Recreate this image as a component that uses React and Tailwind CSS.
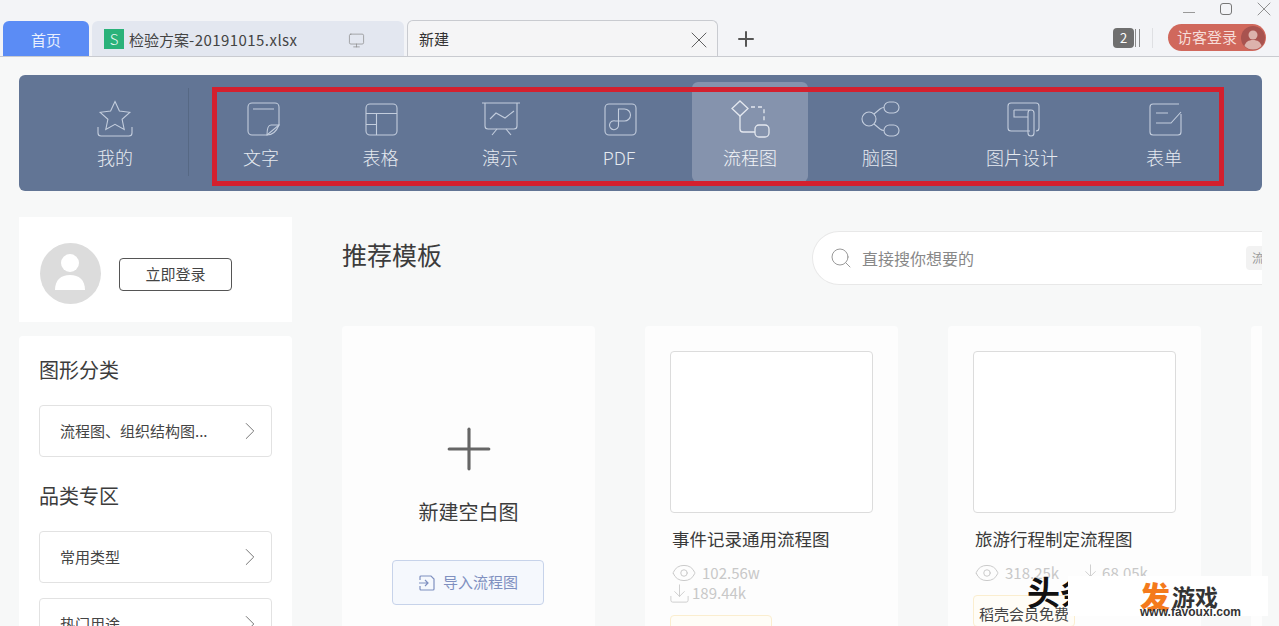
import React from 'react';
import { Monitor, X, Plus, ChevronRight, Search, Eye, Download } from 'lucide-react';

const ico = 'fill-none stroke-[#c3cddd] stroke-[1.1]';

const StarIcon = () => (
  <svg width="36" height="38" viewBox="0 0 36 38" className={ico}>
    <path d="M18 1.500l4.400 9.600 10.400 1.200-7.700 7 2.100 10.200-9.200-5.200-9.200 5.200 2.100-10.200-7.700-7 10.400-1.200z" />
    <path d="M1 27v6a3 3 0 0 0 3 3h28a3 3 0 0 0 3-3v-6" />
  </svg>
);
const DocIcon = () => (
  <svg width="33" height="34" viewBox="0 0 33 34" className={ico}>
    <path d="M20 33H5a4 4 0 0 1-4-4V5a4 4 0 0 1 4-4h23a4 4 0 0 1 4 4v18z" />
    <path d="M20 33c0-6 1-10 4-10h8c-2 5-6 10-12 10zM6 7h21" />
  </svg>
);
const TableIcon = () => (
  <svg width="33" height="33" viewBox="0 0 33 33" className={ico}>
    <rect x="1" y="1" width="31" height="31" rx="4" />
    <path d="M1 10.500h31M11.500 10.500V32M1 21.500h10.500" />
  </svg>
);
const SlideIcon = () => (
  <svg width="38" height="34" viewBox="0 0 38 34" className={ico}>
    <path d="M0 1h38M3 1v23a3 3 0 0 0 3 3h26a3 3 0 0 0 3-3V1" />
    <path d="M8 17l6-6 9 5 9-7M15 27l-5 6M24 27l5 6" />
  </svg>
);
const PdfIcon = () => (
  <svg width="33" height="33" viewBox="0 0 33 33" className={ico}>
    <rect x="1" y="1" width="31" height="31" rx="4" />
    <path d="M14.500 22V6h6a6 6 0 0 1 0 12H11.500a4.500 4.500 0 1 0 3 4" />
  </svg>
);
const FlowIcon = () => (
  <svg width="40" height="38" viewBox="0 0 40 38" className="fill-none stroke-[#e4e8ef] stroke-[1.3]">
    <path d="M10 1l8 7.500-8 7.500-8-7.500z" />
    <path d="M21 7h11a2 2 0 0 1 2 2v14" strokeDasharray="4 3" />
    <path d="M10 16v13a3 3 0 0 0 3 3h12" />
    <rect x="25" y="25" width="14" height="12" rx="4" />
  </svg>
);
const MindIcon = () => (
  <svg width="40" height="36" viewBox="0 0 40 36" className={ico}>
    <circle cx="8" cy="18" r="7" />
    <rect x="23" y="1" width="15" height="11" rx="5.500" />
    <rect x="23" y="24" width="15" height="11" rx="5.500" />
    <path d="M13 13l6-5q2-1.500 4-1.500M13 23l6 5q2 1.500 4 1.500" />
  </svg>
);
const DesignIcon = () => (
  <svg width="33" height="35" viewBox="0 0 33 35" className={ico}>
    <path d="M23 29H4a3 3 0 0 1-3-3V4a3 3 0 0 1 3-3h25a3 3 0 0 1 3 3v22a3 3 0 0 1-3 3" />
    <path d="M7 8h17a3 3 0 0 0-3 3v20a3 3 0 0 0 6 0V11a3 3 0 0 0-3-3M7 8v7h14" />
  </svg>
);
const FormIcon = () => (
  <svg width="33" height="33" viewBox="0 0 33 33" className={ico}>
    <path d="M30 1H4a3 3 0 0 0-3 3v25a3 3 0 0 0 3 3h25a3 3 0 0 0 3-3V11" />
    <path d="M7 10h12M7 20h15L32 9" />
  </svg>
);

const navItems = [
  { label: '文字', icon: <DocIcon />, width: 'w-[120px]', iconClass: 'ml-[5px]' },
  { label: '表格', icon: <TableIcon />, width: 'w-[119px]', iconClass: 'ml-[1px]' },
  { label: '演示', icon: <SlideIcon />, width: 'w-[120px]', iconClass: 'ml-[2px]' },
  { label: 'PDF', icon: <PdfIcon />, width: 'w-[118px]', iconClass: 'ml-[3px]' },
  { label: '流程图', icon: <FlowIcon />, width: 'w-[116px] ml-[14px]', iconClass: '', active: true },
  { label: '脑图', icon: <MindIcon />, width: 'w-[144px]', iconClass: 'ml-[1px]' },
  { label: '图片设计', icon: <DesignIcon />, width: 'w-[140px]', iconClass: 'ml-[2px]' },
  { label: '表单', icon: <FormIcon />, width: 'w-[144px]', iconClass: 'ml-[2px]' },
];

const NavItem = ({ item }) => (
  <div
    className={`flex h-[100px] shrink-0 flex-col items-center justify-start rounded-md ${item.width} ${
      item.active ? 'bg-[#8593ad] text-[#f2f4f7]' : 'text-[#e6eaf0]'
    }`}
  >
    <div className={`mt-[19px] flex h-[36px] items-center ${item.iconClass}`}>{item.icon}</div>
    <span className="mt-[7px] text-[18px] font-light leading-[26px]">{item.label}</span>
  </div>
);

const SelectBox = ({ label, className = '' }) => (
  <div className={`flex h-[52px] items-center justify-between rounded border border-[#e2e2e2] bg-white pl-5 pr-[6px] text-[15px] text-[#444] ${className}`}>
    <span>{label}</span>
    <ChevronRight size={30} strokeWidth={0.8} className="text-[#777]" />
  </div>
);

const TemplateCard = ({ title, children }) => (
  <div className="h-[320px] w-[253px] shrink-0 rounded bg-[#fdfdfd] px-[25px] pt-[25px]">
    <div className="h-[162px] w-[203px] rounded-sm border border-[#dcdcdc] bg-white" />
    <div className="mt-[13px] pl-[2px] text-[17.5px] leading-[26px] text-[#3a3a3a]">{title}</div>
    {children}
  </div>
);

const App = () => {
  return (
    <div className="relative h-[626px] w-[1279px] overflow-hidden bg-[#f7f8f8] font-['Noto_Sans_CJK_SC','Noto_Sans',sans-serif]">
      {/* 顶部标签栏 */}
      <div className="flex h-[57px] items-end border-b border-[#c9cbd0] bg-[#f3f4f7] pl-[3px] pr-[9px]">
        <div className="flex h-[35px] w-[86px] items-center justify-center rounded-t-md bg-[#5b8cf5] pt-[3px] text-[15px] text-[#e8effd]">首页</div>
        <div className="ml-[3px] flex h-[35px] w-[312px] items-center rounded-t-md bg-[#e3e7f0] pl-[12px] text-[15px] text-[#444]">
          <span className="flex h-[20px] w-[20px] items-center justify-center bg-[#2ab27a] text-[15px] font-light leading-none text-[#e8f8f1]">S</span>
          <span className="ml-[5px] mt-[3px] whitespace-nowrap">检验方案<span className="tracking-[0.45px]">-20191015.xlsx</span></span>
          <Monitor size={17} strokeWidth={1} className="ml-[50px] mt-[3px] text-[#888]" />
        </div>
        <div className="ml-[3px] flex h-[36px] w-[311px] items-center justify-between rounded-t-md border border-b-0 border-[#c9cbd0] bg-[#f5f5f6] pl-[11px] pr-[4px] text-[15px] text-[#333]">
          <span className="mt-[2px]">新建</span>
          <X size={28} strokeWidth={0.8} className="mt-[2px] text-[#555]" />
        </div>
        <Plus size={24} strokeWidth={2} className="mb-[5px] ml-[16px] text-[#555]" />
        <div className="ml-auto flex h-full flex-col items-end">
          <div className="mt-[3px] flex h-[12px] items-center text-[#777]">
            <div className="mt-[6px] h-px w-[12px] bg-[#999]" />
            <div className="ml-[25px] h-[12px] w-[12px] rounded-[3px] border border-[#777]" />
            <X size={24} strokeWidth={0.8} className="ml-[20px] -mr-[6px]" />
          </div>
          <div className="mr-[4px] mt-[9px] flex items-center">
            <div className="flex h-[20px] w-[21px] items-center justify-center rounded-sm bg-[#6f6f6f] text-[13px] text-white">2</div>
            <div className="ml-[1px] h-[18px] w-[5px] border-x border-[#8a8a8a]" />
            <div className="ml-[12px] h-[20px] w-px bg-[#dfe0e3]" />
            <div className="ml-[15px] flex h-[27px] w-[98px] items-center justify-between rounded-full bg-[#d0685c] pl-[9px] pr-[1px] text-[15px] text-[#f6dcd8]">
              <span>访客登录</span>
              <svg width="24" height="24" viewBox="0 0 24 24">
                <circle cx="12" cy="12" r="12" fill="#a8534f" />
                <circle cx="12" cy="9" r="4.500" fill="#dcb2ac" />
                <path d="M3.500 20c1-4 4-6 8.500-6s7.500 2 8.500 6a12 12 0 0 1-17 0z" fill="#dcb2ac" />
              </svg>
            </div>
          </div>
        </div>
      </div>

      {/* 应用导航 */}
      <div className="relative mx-[19px] mt-[18px] flex h-[116px] w-[1243px] rounded-md bg-[#627595] pt-[7px]">
        <div className="ml-[46px] flex h-[100px] w-[100px] shrink-0 flex-col items-center text-[#e6eaf0]">
          <div className="mt-[19px] flex h-[36px] items-center"><StarIcon /></div>
          <span className="mt-[7px] text-[18px] font-light leading-[26px]">我的</span>
        </div>
        <div className="ml-[23px] mt-[6px] h-[88px] w-px bg-[#566884]" />
        <div className="ml-[12px] flex">
          {navItems.map((item) => (
            <NavItem key={item.label} item={item} />
          ))}
        </div>
        {/* 截图上的红色标注框 */}
        <div className="absolute left-[193px] top-[12px] h-[99px] w-[1012px] border-[5px] border-[#d3202e]" />
      </div>

      <div className="mt-[26px] flex pl-[19px]">
        {/* 左侧栏 */}
        <div className="w-[273px] shrink-0">
          <div className="flex h-[105px] items-center bg-white pl-[21px] pt-[7px]">
            <svg width="61" height="61" viewBox="0 0 61 61">
              <circle cx="30.500" cy="30.500" r="30.500" fill="#dcdcdc" />
              <circle cx="30" cy="20" r="9" fill="#fff" />
              <path d="M15 47c0-10 6-15 15-15s15 5 15 15z" fill="#fff" />
            </svg>
            <div className="ml-[18px] mt-[2px] flex h-[33px] w-[113px] items-center justify-center rounded border border-[#555] text-[15px] text-[#444]">立即登录</div>
          </div>
          <div className="mt-[14px] rounded bg-white px-[20px] pt-[19px] pb-4">
            <div className="text-[20px] leading-[30px] text-[#3c3c3c]">图形分类</div>
            <SelectBox label="流程图、组织结构图..." className="mt-[20px]" />
            <div className="mt-[24px] text-[20px] leading-[30px] text-[#3c3c3c]">品类专区</div>
            <SelectBox label="常用类型" className="mt-[20px]" />
            <SelectBox label="热门用途" className="mt-[15px]" />
          </div>
        </div>

        {/* 模板区 */}
        <div className="ml-[50px] w-[920px] shrink-0 overflow-hidden">
          <div className="flex h-[68px] items-start justify-between">
            <div className="mt-[18px] text-[25px] leading-[38px] text-[#3c3c3c]">推荐模板</div>
            <div className="mt-[14px] flex h-[54px] w-[450px] items-center overflow-hidden rounded-l-full border border-r-0 border-[#e8e8e8] bg-white pl-[16px]">
              <Search size={24} strokeWidth={1} className="text-[#999]" />
              <span className="ml-[9px] text-[16px] text-[#888]">直接搜你想要的</span>
              <div className="ml-auto mr-[-20px] flex h-[24px] w-[36px] items-center rounded bg-[#f2f2f2] pl-[6px] text-[12px] text-[#999]">流程</div>
            </div>
          </div>
          <div className="mt-[41px] flex gap-[50px]">
            <div className="flex h-[320px] w-[253px] shrink-0 flex-col items-center rounded bg-[#fdfdfd] pt-[89px]">
              <Plus size={68} strokeWidth={1.1} className="text-[#666]" />
              <div className="mt-[15px] text-[20px] leading-[28px] text-[#3c3c3c]">新建空白图</div>
              <div className="-ml-[1px] mt-[34px] flex h-[45px] w-[152px] items-center justify-center gap-[7px] rounded border border-[#c7d3ea] bg-[#f5f8fd] text-[15px] text-[#7f90c0]">
                <svg width="18" height="18" viewBox="0 0 18 18" className="fill-none stroke-[#7f90c0] stroke-[1.2]">
                  <path d="M2 6V3a1 1 0 0 1 1-1h10l3 3v10a1 1 0 0 1-1 1H3a1 1 0 0 1-1-1v-3M1 9h9M7 6l3 3-3 3" />
                </svg>
                <span>导入流程图</span>
              </div>
            </div>
            <TemplateCard title="事件记录通用流程图">
              <div className="mt-[11px] flex h-[20px] items-center pl-[1px] text-[15px] text-[#c8c8c8]">
                <Eye size={26} strokeWidth={0.9} />
                <span className="ml-[5px]">102.56w</span>
              </div>
              <div className="flex h-[20px] items-center -ml-[2px] text-[15px] text-[#c8c8c8]">
                <Download size={23} strokeWidth={0.9} />
                <span className="ml-[1px]">189.44k</span>
              </div>
              <div className="mt-[12px] h-[28px] w-[102px] rounded-sm border border-[#fbeecf] bg-[#fffdf7]" />
            </TemplateCard>
            <TemplateCard title="旅游行程制定流程图">
              <div className="mt-[11px] flex h-[20px] items-center pl-[1px] text-[15px] text-[#c8c8c8]">
                <Eye size={26} strokeWidth={0.9} />
                <span className="ml-[5px]">318.25k</span>
                <Download size={23} strokeWidth={0.9} className="ml-[20px]" />
                <span>68.05k</span>
              </div>
              <div className="mt-[12px] h-[32px] w-[102px] rounded-sm border border-[#fbeecf] bg-[#fffdf7] pl-[5px] pt-[8px] text-[15px] leading-[20px] whitespace-nowrap text-[#444]">稻壳会员免费</div>
            </TemplateCard>
            <div className="h-[320px] w-[253px] shrink-0 rounded bg-[#fdfdfd]" />
          </div>
        </div>
      </div>

      {/* 图片水印 */}
      <div className="absolute left-[1027px] top-[572px] text-[33px] font-bold leading-[38px] text-[#111]">头条</div>
      <div className="absolute left-[1068px] top-[576px] flex h-[40px] w-[200px] overflow-hidden bg-white pl-[72px]">
        <div className="relative w-full">
          <span className="absolute left-0 top-[1px] text-[30px] font-black leading-[36px] text-[#f47a1c]">发</span>
          <span className="absolute left-[32px] top-[6px] text-[23px] font-bold leading-[28px] text-[#333]">游戏</span>
          <span className="absolute left-0 top-[29px] font-['Liberation_Sans',sans-serif] text-[12px] font-bold leading-[14px] text-[#333]">www.fayouxi.com</span>
        </div>
      </div>
    </div>
  );
};

export default App;
